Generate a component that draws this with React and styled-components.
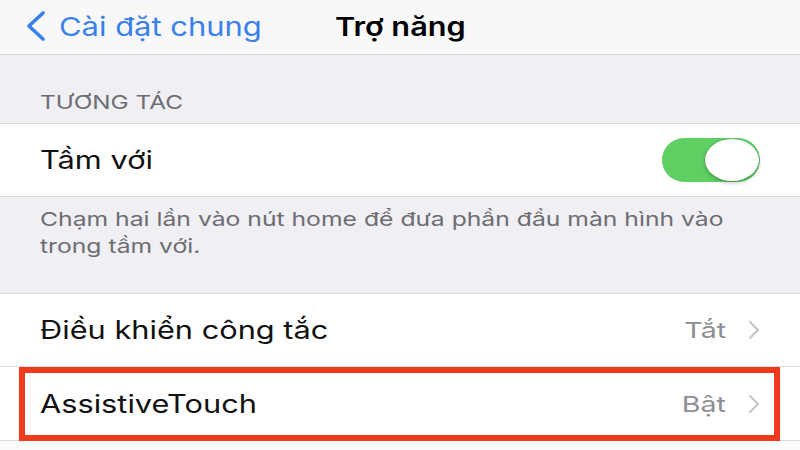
import React from "react";
import styled, { createGlobalStyle } from "styled-components";

const Global = createGlobalStyle`
  html, body { margin: 0; padding: 0; }
  body {
    width: 800px;
    height: 450px;
    overflow: hidden;
    background: #efeff4;
    font-family: Inter, "Open Sans", "Noto Sans", sans-serif;
    -webkit-font-smoothing: antialiased;
  }
`;

/* The screenshot is horizontally stretched; text is widened to match. */
const Wide = styled.span`
  display: inline-block;
  white-space: nowrap;
  transform: scaleX(${(p) => p.$sx || 1.2});
  transform-origin: ${(p) => (p.$right ? "right" : "left")} center;
`;

const Screen = styled.div`
  width: 800px;
  height: 450px;
  display: flex;
  flex-direction: column;
  background: #efeff4;
`;

const NavBar = styled.div`
  height: 55px;
  flex-shrink: 0;
  background: #f8f8f8;
  border-bottom: 1px solid #d8d8dc;
  display: flex;
  align-items: center;
  padding: 0 0 2px 24px;
  box-sizing: border-box;
`;

const BackButton = styled.div`
  display: flex;
  align-items: center;
  gap: 11px;
  color: #3a80ec;
  font-size: 26px;
  width: 311px;
`;

const NavTitle = styled.div`
  font-size: 26px;
  font-weight: 600;
  color: #000;
`;

const SectionHeader = styled.div`
  height: 69px;
  box-sizing: border-box;
  padding: 36px 0 0 40px;
  font-size: 19px;
  color: #6d6d72;
  border-bottom: 1px solid #dcdce0;
`;

const Group = styled.div`
  background: #fff;
  border-bottom: 1px solid #dcdce0;
  border-top: ${(p) => (p.$top ? "1px solid #dcdce0" : "none")};
`;

const Row = styled.div`
  height: ${(p) => p.$h || 72}px;
  box-sizing: border-box;
  display: flex;
  align-items: center;
  padding: 0 40px 0 40px;
  position: relative;
  border-bottom: ${(p) => (p.$sep ? "1px solid #dcdce0" : "none")};
`;

const Label = styled.div`
  flex: 1;
  font-size: 25px;
  color: #111;
`;

const Value = styled.div`
  font-size: 22px;
  color: #8e8e93;
  margin-right: 22px;
`;

const Highlight = styled.div`
  position: absolute;
  left: 19px;
  right: 20px;
  top: 0;
  bottom: -1px;
  border: 6px solid #f03a1c;
  pointer-events: none;
`;

const Toggle = styled.div`
  width: 98px;
  height: 44px;
  border-radius: 22px;
  background: #5dcf63;
  position: relative;
`;

const Knob = styled.div`
  position: absolute;
  right: 1px;
  top: 1px;
  width: 54px;
  height: 42px;
  border-radius: 50%;
  background: #fff;
  box-shadow: 0 0 0 0.5px rgba(0, 0, 0, 0.15), 0 2px 4px rgba(0, 0, 0, 0.22);
`;

const Footer = styled.div`
  height: 96px;
  box-sizing: border-box;
  padding: 9px 40px 0 40px;
  font-size: 19px;
  line-height: 27px;
  color: #6d6d72;
  display: flex;
  flex-direction: column;
  align-items: flex-start;
`;

const Tail = styled.div`
  flex: 1;
  background: #fbfbfb;
`;

const Chevron = ({ color = "#c4c4c9" }) => (
  <svg width="12" height="20" viewBox="0 0 12 20" fill="none">
    <path d="M2 2 L10 10 L2 18" stroke={color} strokeWidth="2" strokeLinecap="round" strokeLinejoin="round" />
  </svg>
);

const BackChevron = () => (
  <svg width="24" height="30" viewBox="0 0 24 30" fill="none">
    <path d="M19 2 L5 15 L19 28" stroke="#3a80ec" strokeWidth="3.6" strokeLinecap="round" strokeLinejoin="round" />
  </svg>
);

export default function App() {
  return (
    <>
      <Global />
      <Screen>
        <NavBar>
          <BackButton>
            <BackChevron />
            <Wide $sx={1.19}>Cài đặt chung</Wide>
          </BackButton>
          <NavTitle>
            <Wide $sx={1.18}>Trợ năng</Wide>
          </NavTitle>
        </NavBar>
        <SectionHeader>
          <Wide $sx={1.28}>TƯƠNG TÁC</Wide>
        </SectionHeader>
        <Group>
          <Row $h={72}>
            <Label>
              <Wide $sx={1.23}>Tầm với</Wide>
            </Label>
            <Toggle>
              <Knob />
            </Toggle>
          </Row>
        </Group>
        <Footer>
          <Wide $sx={1.3}>Chạm hai lần vào nút home để đưa phần đầu màn hình vào</Wide>
          <Wide $sx={1.3}>trong tầm với.</Wide>
        </Footer>
        <Group $top>
          <Row $h={73} $sep>
            <Label>
              <Wide $sx={1.23}>Điều khiển công tắc</Wide>
            </Label>
            <Value>
              <Wide $sx={1.3} $right>Tắt</Wide>
            </Value>
            <Chevron />
          </Row>
          <Row $h={73}>
            <Label>
              <Wide $sx={1.23}>AssistiveTouch</Wide>
            </Label>
            <Value>
              <Wide $sx={1.3} $right>Bật</Wide>
            </Value>
            <Chevron />
            <Highlight />
          </Row>
        </Group>
        <Tail />
      </Screen>
    </>
  );
}
